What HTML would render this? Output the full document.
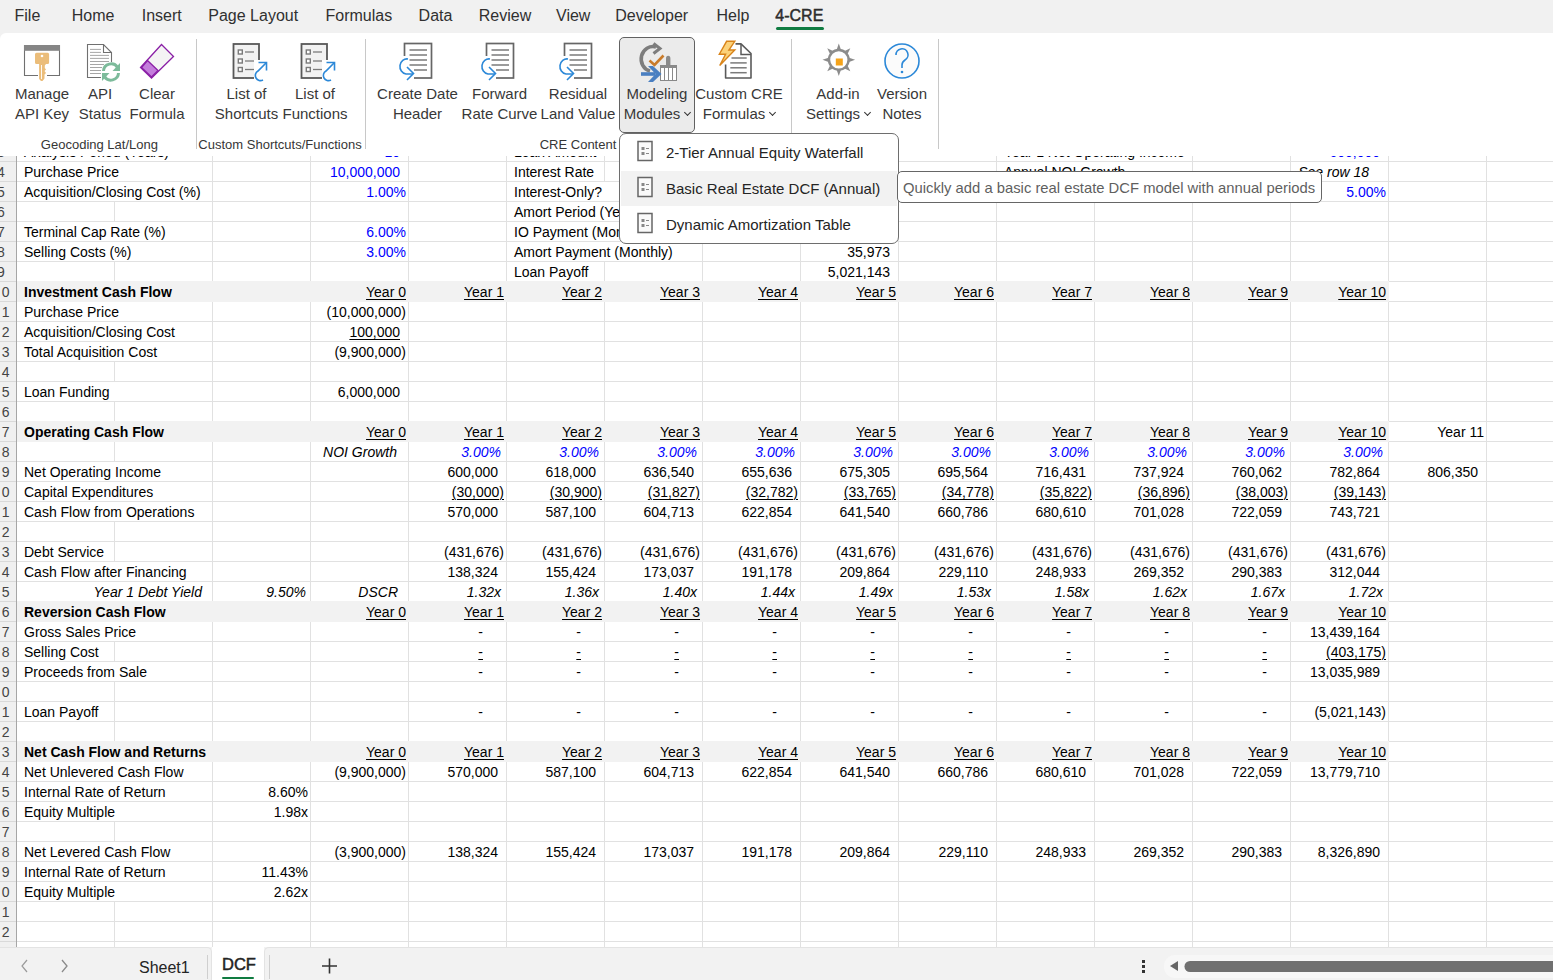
<!DOCTYPE html><html><head><meta charset="utf-8"><style>

html,body{margin:0;padding:0;}
body{width:1553px;height:980px;overflow:hidden;position:relative;background:#fff;font-family:"Liberation Sans", sans-serif;}
div,span{position:absolute;box-sizing:border-box;}
.c{font-size:14px;line-height:20px;height:19px;white-space:nowrap;color:#000;}
.blue{color:#0000ff;}
.it{font-style:italic;}
.bd{font-weight:bold;}
.ul{text-decoration:underline;text-underline-offset:2px;text-decoration-thickness:1px;}
.rn{font-size:14px;line-height:20px;color:#444;white-space:nowrap}
#sheet{left:0;top:0;width:1553px;height:980px;overflow:hidden}

</style></head><body>
<div id="sheet"><div style="left:0;top:156px;width:16px;height:791px;background:#f0f0f0"></div><div style="left:0;top:161px;width:16px;height:1px;background:#d9d9d9"></div><div style="left:0;top:181px;width:16px;height:1px;background:#d9d9d9"></div><div style="left:0;top:201px;width:16px;height:1px;background:#d9d9d9"></div><div style="left:0;top:221px;width:16px;height:1px;background:#d9d9d9"></div><div style="left:0;top:241px;width:16px;height:1px;background:#d9d9d9"></div><div style="left:0;top:261px;width:16px;height:1px;background:#d9d9d9"></div><div style="left:0;top:281px;width:16px;height:1px;background:#d9d9d9"></div><div style="left:0;top:301px;width:16px;height:1px;background:#d9d9d9"></div><div style="left:0;top:321px;width:16px;height:1px;background:#d9d9d9"></div><div style="left:0;top:341px;width:16px;height:1px;background:#d9d9d9"></div><div style="left:0;top:361px;width:16px;height:1px;background:#d9d9d9"></div><div style="left:0;top:381px;width:16px;height:1px;background:#d9d9d9"></div><div style="left:0;top:401px;width:16px;height:1px;background:#d9d9d9"></div><div style="left:0;top:421px;width:16px;height:1px;background:#d9d9d9"></div><div style="left:0;top:441px;width:16px;height:1px;background:#d9d9d9"></div><div style="left:0;top:461px;width:16px;height:1px;background:#d9d9d9"></div><div style="left:0;top:481px;width:16px;height:1px;background:#d9d9d9"></div><div style="left:0;top:501px;width:16px;height:1px;background:#d9d9d9"></div><div style="left:0;top:521px;width:16px;height:1px;background:#d9d9d9"></div><div style="left:0;top:541px;width:16px;height:1px;background:#d9d9d9"></div><div style="left:0;top:561px;width:16px;height:1px;background:#d9d9d9"></div><div style="left:0;top:581px;width:16px;height:1px;background:#d9d9d9"></div><div style="left:0;top:601px;width:16px;height:1px;background:#d9d9d9"></div><div style="left:0;top:621px;width:16px;height:1px;background:#d9d9d9"></div><div style="left:0;top:641px;width:16px;height:1px;background:#d9d9d9"></div><div style="left:0;top:661px;width:16px;height:1px;background:#d9d9d9"></div><div style="left:0;top:681px;width:16px;height:1px;background:#d9d9d9"></div><div style="left:0;top:701px;width:16px;height:1px;background:#d9d9d9"></div><div style="left:0;top:721px;width:16px;height:1px;background:#d9d9d9"></div><div style="left:0;top:741px;width:16px;height:1px;background:#d9d9d9"></div><div style="left:0;top:761px;width:16px;height:1px;background:#d9d9d9"></div><div style="left:0;top:781px;width:16px;height:1px;background:#d9d9d9"></div><div style="left:0;top:801px;width:16px;height:1px;background:#d9d9d9"></div><div style="left:0;top:821px;width:16px;height:1px;background:#d9d9d9"></div><div style="left:0;top:841px;width:16px;height:1px;background:#d9d9d9"></div><div style="left:0;top:861px;width:16px;height:1px;background:#d9d9d9"></div><div style="left:0;top:881px;width:16px;height:1px;background:#d9d9d9"></div><div style="left:0;top:901px;width:16px;height:1px;background:#d9d9d9"></div><div style="left:0;top:921px;width:16px;height:1px;background:#d9d9d9"></div><div style="left:0;top:941px;width:16px;height:1px;background:#d9d9d9"></div><div style="left:16px;top:156px;width:1px;height:791px;background:#a6a6a6"></div><div class="rn" style="left:-3px;top:142px">3</div><div class="rn" style="left:-3px;top:162px">4</div><div class="rn" style="left:-3px;top:182px">5</div><div class="rn" style="left:-3px;top:202px">6</div><div class="rn" style="left:-3px;top:222px">7</div><div class="rn" style="left:-3px;top:242px">8</div><div class="rn" style="left:-3px;top:262px">9</div><div class="rn" style="left:1.8px;top:282px">0</div><div class="rn" style="left:1.8px;top:302px">1</div><div class="rn" style="left:1.8px;top:322px">2</div><div class="rn" style="left:1.8px;top:342px">3</div><div class="rn" style="left:1.8px;top:362px">4</div><div class="rn" style="left:1.8px;top:382px">5</div><div class="rn" style="left:1.8px;top:402px">6</div><div class="rn" style="left:1.8px;top:422px">7</div><div class="rn" style="left:1.8px;top:442px">8</div><div class="rn" style="left:1.8px;top:462px">9</div><div class="rn" style="left:1.8px;top:482px">0</div><div class="rn" style="left:1.8px;top:502px">1</div><div class="rn" style="left:1.8px;top:522px">2</div><div class="rn" style="left:1.8px;top:542px">3</div><div class="rn" style="left:1.8px;top:562px">4</div><div class="rn" style="left:1.8px;top:582px">5</div><div class="rn" style="left:1.8px;top:602px">6</div><div class="rn" style="left:1.8px;top:622px">7</div><div class="rn" style="left:1.8px;top:642px">8</div><div class="rn" style="left:1.8px;top:662px">9</div><div class="rn" style="left:1.8px;top:682px">0</div><div class="rn" style="left:1.8px;top:702px">1</div><div class="rn" style="left:1.8px;top:722px">2</div><div class="rn" style="left:1.8px;top:742px">3</div><div class="rn" style="left:1.8px;top:762px">4</div><div class="rn" style="left:1.8px;top:782px">5</div><div class="rn" style="left:1.8px;top:802px">6</div><div class="rn" style="left:1.8px;top:822px">7</div><div class="rn" style="left:1.8px;top:842px">8</div><div class="rn" style="left:1.8px;top:862px">9</div><div class="rn" style="left:1.8px;top:882px">0</div><div class="rn" style="left:1.8px;top:902px">1</div><div class="rn" style="left:1.8px;top:922px">2</div><div class="rn" style="left:1.8px;top:942px">3</div><div style="left:114px;top:156px;width:1px;height:791px;background:#e1e1e1"></div><div style="left:212px;top:156px;width:1px;height:791px;background:#e1e1e1"></div><div style="left:310px;top:156px;width:1px;height:791px;background:#e1e1e1"></div><div style="left:408px;top:156px;width:1px;height:791px;background:#e1e1e1"></div><div style="left:506px;top:156px;width:1px;height:791px;background:#e1e1e1"></div><div style="left:604px;top:156px;width:1px;height:791px;background:#e1e1e1"></div><div style="left:702px;top:156px;width:1px;height:791px;background:#e1e1e1"></div><div style="left:800px;top:156px;width:1px;height:791px;background:#e1e1e1"></div><div style="left:898px;top:156px;width:1px;height:791px;background:#e1e1e1"></div><div style="left:996px;top:156px;width:1px;height:791px;background:#e1e1e1"></div><div style="left:1094px;top:156px;width:1px;height:791px;background:#e1e1e1"></div><div style="left:1192px;top:156px;width:1px;height:791px;background:#e1e1e1"></div><div style="left:1290px;top:156px;width:1px;height:791px;background:#e1e1e1"></div><div style="left:1388px;top:156px;width:1px;height:791px;background:#e1e1e1"></div><div style="left:1486px;top:156px;width:1px;height:791px;background:#e1e1e1"></div><div style="left:17px;top:161px;width:1536px;height:1px;background:#e1e1e1"></div><div style="left:17px;top:181px;width:1536px;height:1px;background:#e1e1e1"></div><div style="left:17px;top:201px;width:1536px;height:1px;background:#e1e1e1"></div><div style="left:17px;top:221px;width:1536px;height:1px;background:#e1e1e1"></div><div style="left:17px;top:241px;width:1536px;height:1px;background:#e1e1e1"></div><div style="left:17px;top:261px;width:1536px;height:1px;background:#e1e1e1"></div><div style="left:17px;top:281px;width:1536px;height:1px;background:#e1e1e1"></div><div style="left:17px;top:301px;width:1536px;height:1px;background:#e1e1e1"></div><div style="left:17px;top:321px;width:1536px;height:1px;background:#e1e1e1"></div><div style="left:17px;top:341px;width:1536px;height:1px;background:#e1e1e1"></div><div style="left:17px;top:361px;width:1536px;height:1px;background:#e1e1e1"></div><div style="left:17px;top:381px;width:1536px;height:1px;background:#e1e1e1"></div><div style="left:17px;top:401px;width:1536px;height:1px;background:#e1e1e1"></div><div style="left:17px;top:421px;width:1536px;height:1px;background:#e1e1e1"></div><div style="left:17px;top:441px;width:1536px;height:1px;background:#e1e1e1"></div><div style="left:17px;top:461px;width:1536px;height:1px;background:#e1e1e1"></div><div style="left:17px;top:481px;width:1536px;height:1px;background:#e1e1e1"></div><div style="left:17px;top:501px;width:1536px;height:1px;background:#e1e1e1"></div><div style="left:17px;top:521px;width:1536px;height:1px;background:#e1e1e1"></div><div style="left:17px;top:541px;width:1536px;height:1px;background:#e1e1e1"></div><div style="left:17px;top:561px;width:1536px;height:1px;background:#e1e1e1"></div><div style="left:17px;top:581px;width:1536px;height:1px;background:#e1e1e1"></div><div style="left:17px;top:601px;width:1536px;height:1px;background:#e1e1e1"></div><div style="left:17px;top:621px;width:1536px;height:1px;background:#e1e1e1"></div><div style="left:17px;top:641px;width:1536px;height:1px;background:#e1e1e1"></div><div style="left:17px;top:661px;width:1536px;height:1px;background:#e1e1e1"></div><div style="left:17px;top:681px;width:1536px;height:1px;background:#e1e1e1"></div><div style="left:17px;top:701px;width:1536px;height:1px;background:#e1e1e1"></div><div style="left:17px;top:721px;width:1536px;height:1px;background:#e1e1e1"></div><div style="left:17px;top:741px;width:1536px;height:1px;background:#e1e1e1"></div><div style="left:17px;top:761px;width:1536px;height:1px;background:#e1e1e1"></div><div style="left:17px;top:781px;width:1536px;height:1px;background:#e1e1e1"></div><div style="left:17px;top:801px;width:1536px;height:1px;background:#e1e1e1"></div><div style="left:17px;top:821px;width:1536px;height:1px;background:#e1e1e1"></div><div style="left:17px;top:841px;width:1536px;height:1px;background:#e1e1e1"></div><div style="left:17px;top:861px;width:1536px;height:1px;background:#e1e1e1"></div><div style="left:17px;top:881px;width:1536px;height:1px;background:#e1e1e1"></div><div style="left:17px;top:901px;width:1536px;height:1px;background:#e1e1e1"></div><div style="left:17px;top:921px;width:1536px;height:1px;background:#e1e1e1"></div><div style="left:17px;top:941px;width:1536px;height:1px;background:#e1e1e1"></div><div style="left:17px;top:281px;width:1372px;height:21px;background:#f2f2f2"></div><div style="left:17px;top:421px;width:1372px;height:21px;background:#f2f2f2"></div><div style="left:17px;top:601px;width:1372px;height:21px;background:#f2f2f2"></div><div style="left:17px;top:741px;width:1372px;height:21px;background:#f2f2f2"></div><div class="c " style="left:24px;background:#fff;padding-right:6px;top:142px">Analysis Period (Years)</div><div class="c blue" style="right:1153px;top:142px">10</div><div class="c " style="left:514px;background:#fff;padding-right:6px;top:142px">Loan Amount</div><div class="c " style="right:663px;top:142px">6,000,000</div><div class="c " style="left:1004px;background:#fff;padding-right:6px;top:142px">Year 1 Net Operating Income</div><div class="c blue" style="right:173px;top:142px">600,000</div><div class="c " style="left:24px;background:#fff;padding-right:6px;top:162px">Purchase Price</div><div class="c blue" style="right:1153px;top:162px">10,000,000</div><div class="c " style="left:514px;background:#fff;padding-right:6px;top:162px">Interest Rate</div><div class="c blue" style="right:657px;top:162px">5.00%</div><div class="c " style="left:1004px;background:#fff;padding-right:6px;top:162px">Annual NOI Growth</div><div class="c it" style="right:184px;top:162px">See row 18</div><div class="c " style="left:24px;background:#fff;padding-right:6px;top:182px">Acquisition/Closing Cost (%)</div><div class="c blue" style="right:1147px;top:182px">1.00%</div><div class="c " style="left:514px;background:#fff;padding-right:6px;top:182px">Interest-Only?</div><div class="c " style="left:1004px;background:#fff;padding-right:6px;top:182px">Annual Capex (% of NOI)</div><div class="c blue" style="right:167px;top:182px">5.00%</div><div class="c " style="left:514px;background:#fff;padding-right:6px;top:202px">Amort Period (Years)</div><div class="c " style="left:24px;background:#fff;padding-right:6px;top:222px">Terminal Cap Rate (%)</div><div class="c blue" style="right:1147px;top:222px">6.00%</div><div class="c " style="left:514px;background:#fff;padding-right:6px;top:222px">IO Payment (Monthly)</div><div class="c " style="left:24px;background:#fff;padding-right:6px;top:242px">Selling Costs (%)</div><div class="c blue" style="right:1147px;top:242px">3.00%</div><div class="c " style="left:514px;background:#fff;padding-right:6px;top:242px">Amort Payment (Monthly)</div><div class="c " style="right:663px;top:242px">35,973</div><div class="c " style="left:514px;background:#fff;padding-right:6px;top:262px">Loan Payoff</div><div class="c " style="right:663px;top:262px">5,021,143</div><div class="c bd" style="left:24px;top:282px">Investment Cash Flow</div><div class="c ul" style="right:1147px;top:282px">Year 0</div><div class="c ul" style="right:1049px;top:282px">Year 1</div><div class="c ul" style="right:951px;top:282px">Year 2</div><div class="c ul" style="right:853px;top:282px">Year 3</div><div class="c ul" style="right:755px;top:282px">Year 4</div><div class="c ul" style="right:657px;top:282px">Year 5</div><div class="c ul" style="right:559px;top:282px">Year 6</div><div class="c ul" style="right:461px;top:282px">Year 7</div><div class="c ul" style="right:363px;top:282px">Year 8</div><div class="c ul" style="right:265px;top:282px">Year 9</div><div class="c ul" style="right:167px;top:282px">Year 10</div><div class="c " style="left:24px;background:#fff;padding-right:6px;top:302px">Purchase Price</div><div class="c " style="right:1147px;top:302px">(10,000,000)</div><div class="c " style="left:24px;background:#fff;padding-right:6px;top:322px">Acquisition/Closing Cost</div><div class="c ul" style="right:1153px;top:322px">100,000</div><div class="c " style="left:24px;background:#fff;padding-right:6px;top:342px">Total Acquisition Cost</div><div class="c " style="right:1147px;top:342px">(9,900,000)</div><div class="c " style="left:24px;background:#fff;padding-right:6px;top:382px">Loan Funding</div><div class="c " style="right:1153px;top:382px">6,000,000</div><div class="c bd" style="left:24px;top:422px">Operating Cash Flow</div><div class="c ul" style="right:1147px;top:422px">Year 0</div><div class="c ul" style="right:1049px;top:422px">Year 1</div><div class="c ul" style="right:951px;top:422px">Year 2</div><div class="c ul" style="right:853px;top:422px">Year 3</div><div class="c ul" style="right:755px;top:422px">Year 4</div><div class="c ul" style="right:657px;top:422px">Year 5</div><div class="c ul" style="right:559px;top:422px">Year 6</div><div class="c ul" style="right:461px;top:422px">Year 7</div><div class="c ul" style="right:363px;top:422px">Year 8</div><div class="c ul" style="right:265px;top:422px">Year 9</div><div class="c ul" style="right:167px;top:422px">Year 10</div><div class="c " style="right:69px;top:422px">Year 11</div><div class="c it" style="right:1156px;top:442px">NOI Growth</div><div class="c it blue" style="right:1052px;top:442px">3.00%</div><div class="c it blue" style="right:954px;top:442px">3.00%</div><div class="c it blue" style="right:856px;top:442px">3.00%</div><div class="c it blue" style="right:758px;top:442px">3.00%</div><div class="c it blue" style="right:660px;top:442px">3.00%</div><div class="c it blue" style="right:562px;top:442px">3.00%</div><div class="c it blue" style="right:464px;top:442px">3.00%</div><div class="c it blue" style="right:366px;top:442px">3.00%</div><div class="c it blue" style="right:268px;top:442px">3.00%</div><div class="c it blue" style="right:170px;top:442px">3.00%</div><div class="c " style="left:24px;background:#fff;padding-right:6px;top:462px">Net Operating Income</div><div class="c " style="right:1055px;top:462px">600,000</div><div class="c " style="right:957px;top:462px">618,000</div><div class="c " style="right:859px;top:462px">636,540</div><div class="c " style="right:761px;top:462px">655,636</div><div class="c " style="right:663px;top:462px">675,305</div><div class="c " style="right:565px;top:462px">695,564</div><div class="c " style="right:467px;top:462px">716,431</div><div class="c " style="right:369px;top:462px">737,924</div><div class="c " style="right:271px;top:462px">760,062</div><div class="c " style="right:173px;top:462px">782,864</div><div class="c " style="right:75px;top:462px">806,350</div><div class="c " style="left:24px;background:#fff;padding-right:6px;top:482px">Capital Expenditures</div><div class="c ul" style="right:1049px;top:482px">(30,000)</div><div class="c ul" style="right:951px;top:482px">(30,900)</div><div class="c ul" style="right:853px;top:482px">(31,827)</div><div class="c ul" style="right:755px;top:482px">(32,782)</div><div class="c ul" style="right:657px;top:482px">(33,765)</div><div class="c ul" style="right:559px;top:482px">(34,778)</div><div class="c ul" style="right:461px;top:482px">(35,822)</div><div class="c ul" style="right:363px;top:482px">(36,896)</div><div class="c ul" style="right:265px;top:482px">(38,003)</div><div class="c ul" style="right:167px;top:482px">(39,143)</div><div class="c " style="left:24px;background:#fff;padding-right:6px;top:502px">Cash Flow from Operations</div><div class="c " style="right:1055px;top:502px">570,000</div><div class="c " style="right:957px;top:502px">587,100</div><div class="c " style="right:859px;top:502px">604,713</div><div class="c " style="right:761px;top:502px">622,854</div><div class="c " style="right:663px;top:502px">641,540</div><div class="c " style="right:565px;top:502px">660,786</div><div class="c " style="right:467px;top:502px">680,610</div><div class="c " style="right:369px;top:502px">701,028</div><div class="c " style="right:271px;top:502px">722,059</div><div class="c " style="right:173px;top:502px">743,721</div><div class="c " style="left:24px;background:#fff;padding-right:6px;top:542px">Debt Service</div><div class="c " style="right:1049px;top:542px">(431,676)</div><div class="c " style="right:951px;top:542px">(431,676)</div><div class="c " style="right:853px;top:542px">(431,676)</div><div class="c " style="right:755px;top:542px">(431,676)</div><div class="c " style="right:657px;top:542px">(431,676)</div><div class="c " style="right:559px;top:542px">(431,676)</div><div class="c " style="right:461px;top:542px">(431,676)</div><div class="c " style="right:363px;top:542px">(431,676)</div><div class="c " style="right:265px;top:542px">(431,676)</div><div class="c " style="right:167px;top:542px">(431,676)</div><div class="c " style="left:24px;background:#fff;padding-right:6px;top:562px">Cash Flow after Financing</div><div class="c " style="right:1055px;top:562px">138,324</div><div class="c " style="right:957px;top:562px">155,424</div><div class="c " style="right:859px;top:562px">173,037</div><div class="c " style="right:761px;top:562px">191,178</div><div class="c " style="right:663px;top:562px">209,864</div><div class="c " style="right:565px;top:562px">229,110</div><div class="c " style="right:467px;top:562px">248,933</div><div class="c " style="right:369px;top:562px">269,352</div><div class="c " style="right:271px;top:562px">290,383</div><div class="c " style="right:173px;top:562px">312,044</div><div class="c it" style="right:1351px;background:#fff;top:582px">Year 1 Debt Yield</div><div class="c it" style="right:1247px;top:582px">9.50%</div><div class="c it" style="right:1155px;top:582px">DSCR</div><div class="c it" style="right:1052px;top:582px">1.32x</div><div class="c it" style="right:954px;top:582px">1.36x</div><div class="c it" style="right:856px;top:582px">1.40x</div><div class="c it" style="right:758px;top:582px">1.44x</div><div class="c it" style="right:660px;top:582px">1.49x</div><div class="c it" style="right:562px;top:582px">1.53x</div><div class="c it" style="right:464px;top:582px">1.58x</div><div class="c it" style="right:366px;top:582px">1.62x</div><div class="c it" style="right:268px;top:582px">1.67x</div><div class="c it" style="right:170px;top:582px">1.72x</div><div class="c bd" style="left:24px;top:602px">Reversion Cash Flow</div><div class="c ul" style="right:1147px;top:602px">Year 0</div><div class="c ul" style="right:1049px;top:602px">Year 1</div><div class="c ul" style="right:951px;top:602px">Year 2</div><div class="c ul" style="right:853px;top:602px">Year 3</div><div class="c ul" style="right:755px;top:602px">Year 4</div><div class="c ul" style="right:657px;top:602px">Year 5</div><div class="c ul" style="right:559px;top:602px">Year 6</div><div class="c ul" style="right:461px;top:602px">Year 7</div><div class="c ul" style="right:363px;top:602px">Year 8</div><div class="c ul" style="right:265px;top:602px">Year 9</div><div class="c ul" style="right:167px;top:602px">Year 10</div><div class="c " style="left:24px;background:#fff;padding-right:6px;top:622px">Gross Sales Price</div><div class="c " style="left:24px;background:#fff;padding-right:6px;top:642px">Selling Cost</div><div class="c " style="left:24px;background:#fff;padding-right:6px;top:662px">Proceeds from Sale</div><div class="c " style="left:24px;background:#fff;padding-right:6px;top:702px">Loan Payoff</div><div class="c " style="right:1070px;top:622px">-</div><div class="c " style="right:972px;top:622px">-</div><div class="c " style="right:874px;top:622px">-</div><div class="c " style="right:776px;top:622px">-</div><div class="c " style="right:678px;top:622px">-</div><div class="c " style="right:580px;top:622px">-</div><div class="c " style="right:482px;top:622px">-</div><div class="c " style="right:384px;top:622px">-</div><div class="c " style="right:286px;top:622px">-</div><div class="c ul" style="right:1070px;top:642px">-</div><div class="c ul" style="right:972px;top:642px">-</div><div class="c ul" style="right:874px;top:642px">-</div><div class="c ul" style="right:776px;top:642px">-</div><div class="c ul" style="right:678px;top:642px">-</div><div class="c ul" style="right:580px;top:642px">-</div><div class="c ul" style="right:482px;top:642px">-</div><div class="c ul" style="right:384px;top:642px">-</div><div class="c ul" style="right:286px;top:642px">-</div><div class="c " style="right:1070px;top:662px">-</div><div class="c " style="right:972px;top:662px">-</div><div class="c " style="right:874px;top:662px">-</div><div class="c " style="right:776px;top:662px">-</div><div class="c " style="right:678px;top:662px">-</div><div class="c " style="right:580px;top:662px">-</div><div class="c " style="right:482px;top:662px">-</div><div class="c " style="right:384px;top:662px">-</div><div class="c " style="right:286px;top:662px">-</div><div class="c " style="right:1070px;top:702px">-</div><div class="c " style="right:972px;top:702px">-</div><div class="c " style="right:874px;top:702px">-</div><div class="c " style="right:776px;top:702px">-</div><div class="c " style="right:678px;top:702px">-</div><div class="c " style="right:580px;top:702px">-</div><div class="c " style="right:482px;top:702px">-</div><div class="c " style="right:384px;top:702px">-</div><div class="c " style="right:286px;top:702px">-</div><div class="c " style="right:173px;top:622px">13,439,164</div><div class="c ul" style="right:167px;top:642px">(403,175)</div><div class="c " style="right:173px;top:662px">13,035,989</div><div class="c " style="right:167px;top:702px">(5,021,143)</div><div class="c bd" style="left:24px;top:742px">Net Cash Flow and Returns</div><div class="c ul" style="right:1147px;top:742px">Year 0</div><div class="c ul" style="right:1049px;top:742px">Year 1</div><div class="c ul" style="right:951px;top:742px">Year 2</div><div class="c ul" style="right:853px;top:742px">Year 3</div><div class="c ul" style="right:755px;top:742px">Year 4</div><div class="c ul" style="right:657px;top:742px">Year 5</div><div class="c ul" style="right:559px;top:742px">Year 6</div><div class="c ul" style="right:461px;top:742px">Year 7</div><div class="c ul" style="right:363px;top:742px">Year 8</div><div class="c ul" style="right:265px;top:742px">Year 9</div><div class="c ul" style="right:167px;top:742px">Year 10</div><div class="c " style="left:24px;background:#fff;padding-right:6px;top:762px">Net Unlevered Cash Flow</div><div class="c " style="right:1147px;top:762px">(9,900,000)</div><div class="c " style="right:1055px;top:762px">570,000</div><div class="c " style="right:957px;top:762px">587,100</div><div class="c " style="right:859px;top:762px">604,713</div><div class="c " style="right:761px;top:762px">622,854</div><div class="c " style="right:663px;top:762px">641,540</div><div class="c " style="right:565px;top:762px">660,786</div><div class="c " style="right:467px;top:762px">680,610</div><div class="c " style="right:369px;top:762px">701,028</div><div class="c " style="right:271px;top:762px">722,059</div><div class="c " style="right:173px;top:762px">13,779,710</div><div class="c " style="left:24px;background:#fff;padding-right:6px;top:782px">Internal Rate of Return</div><div class="c " style="right:1245px;top:782px">8.60%</div><div class="c " style="left:24px;background:#fff;padding-right:6px;top:802px">Equity Multiple</div><div class="c " style="right:1245px;top:802px">1.98x</div><div class="c " style="left:24px;background:#fff;padding-right:6px;top:842px">Net Levered Cash Flow</div><div class="c " style="right:1147px;top:842px">(3,900,000)</div><div class="c " style="right:1055px;top:842px">138,324</div><div class="c " style="right:957px;top:842px">155,424</div><div class="c " style="right:859px;top:842px">173,037</div><div class="c " style="right:761px;top:842px">191,178</div><div class="c " style="right:663px;top:842px">209,864</div><div class="c " style="right:565px;top:842px">229,110</div><div class="c " style="right:467px;top:842px">248,933</div><div class="c " style="right:369px;top:842px">269,352</div><div class="c " style="right:271px;top:842px">290,383</div><div class="c " style="right:173px;top:842px">8,326,890</div><div class="c " style="left:24px;background:#fff;padding-right:6px;top:862px">Internal Rate of Return</div><div class="c " style="right:1245px;top:862px">11.43%</div><div class="c " style="left:24px;background:#fff;padding-right:6px;top:882px">Equity Multiple</div><div class="c " style="right:1245px;top:882px">2.62x</div></div>
<style>
.tab{top:1px;font-size:16px;line-height:30px;height:30px;color:#303030;white-space:nowrap}
.bl{width:120px;text-align:center;font-size:15px;line-height:20px;color:#383838;white-space:nowrap}
.chev{position:relative;display:inline-block;width:5px;height:5px;border-right:1.3px solid #333;border-bottom:1.3px solid #333;transform:rotate(45deg);margin-left:5px;top:-4px}
.gl{width:200px;text-align:center;font-size:13px;line-height:18px;color:#363636;white-space:nowrap}
.dd{font-size:15px;line-height:20px;color:#242424;white-space:nowrap}
.tt{font-size:14.8px;line-height:20px;color:#5f5f5f;white-space:nowrap}
.st{font-size:16px;line-height:22px;color:#242424;white-space:nowrap}
</style><div style="left:0;top:0;width:1553px;height:45px;background:#f1f1f1"></div><div style="left:0;top:33px;width:1553px;height:123px;background:#fff;border-top-left-radius:6px"></div><div class="tab" style="left:14.5px">File</div><div class="tab" style="left:71.8px">Home</div><div class="tab" style="left:141.7px">Insert</div><div class="tab" style="left:208.3px">Page Layout</div><div class="tab" style="left:325.5px">Formulas</div><div class="tab" style="left:418.6px">Data</div><div class="tab" style="left:478.8px">Review</div><div class="tab" style="left:556.0px">View</div><div class="tab" style="left:615.2px">Developer</div><div class="tab" style="left:716.5px">Help</div><div class="tab" style="left:775.3px;-webkit-text-stroke:0.45px #242424">4-CRE</div><div style="left:776px;top:27px;width:48px;height:3px;border-radius:2px;background:#107c41"></div><div style="left:619px;top:37px;width:76px;height:96px;background:#ebebeb;border:1px solid #616161;border-radius:5px"></div><div class="bl" style="left:-18px;top:84px">Manage</div><div class="bl" style="left:-18px;top:104px">API Key</div><div class="bl" style="left:40px;top:84px">API</div><div class="bl" style="left:40px;top:104px">Status</div><div class="bl" style="left:97px;top:84px">Clear</div><div class="bl" style="left:97px;top:104px">Formula</div><div class="bl" style="left:186.5px;top:84px">List of</div><div class="bl" style="left:186.5px;top:104px">Shortcuts</div><div class="bl" style="left:255px;top:84px">List of</div><div class="bl" style="left:255px;top:104px">Functions</div><div class="bl" style="left:357.5px;top:84px">Create Date</div><div class="bl" style="left:357.5px;top:104px">Header</div><div class="bl" style="left:439.5px;top:84px">Forward</div><div class="bl" style="left:439.5px;top:104px">Rate Curve</div><div class="bl" style="left:518px;top:84px">Residual</div><div class="bl" style="left:518px;top:104px">Land Value</div><div class="bl" style="left:597px;top:84px">Modeling</div><div class="bl" style="left:597px;top:104px">Modules<span class="chev"></span></div><div class="bl" style="left:679px;top:84px">Custom CRE</div><div class="bl" style="left:679px;top:104px">Formulas<span class="chev"></span></div><div class="bl" style="left:778px;top:84px">Add-in</div><div class="bl" style="left:778px;top:104px">Settings<span class="chev"></span></div><div class="bl" style="left:842px;top:84px">Version</div><div class="bl" style="left:842px;top:104px">Notes</div><div class="gl" style="left:-0.5999999999999943px;top:136px">Geocoding Lat/Long</div><div class="gl" style="left:180px;top:136px">Custom Shortcuts/Functions</div><div class="gl" style="left:478px;top:136px">CRE Content</div><div style="left:196px;top:39px;width:1px;height:110px;background:#c8c8c8"></div><div style="left:365px;top:39px;width:1px;height:110px;background:#c8c8c8"></div><div style="left:791px;top:39px;width:1px;height:110px;background:#c8c8c8"></div><div style="left:938px;top:39px;width:1px;height:110px;background:#c8c8c8"></div><svg style="position:absolute;left:0;top:0" width="1553" height="160" viewBox="0 0 1553 160"><path d="M38 75.5 H24.5 V45.5 H59.5 V75.5 H47" fill="none" stroke="#707070" stroke-width="1.1"/><rect x="24" y="45" width="36" height="5.8" fill="#858585"/><path d="M36.5 52.8 H47.6 a1.5 1.5 0 0 1 1.5 1.5 V62.5 a1.5 1.5 0 0 1 -1.5 1.5 H46 L44.8 65.5 V68 L46 69.5 L44.5 71 L46 73 L44.5 74.5 V78.5 L42.5 81 H41 L39.1 79 V64 H36.5 a1.5 1.5 0 0 1 -1.5 -1.5 V54.3 a1.5 1.5 0 0 1 1.5 -1.5 z" fill="#ebbd7a"/><line x1="41.5" y1="65" x2="41.5" y2="79" stroke="#fff" stroke-width="0.9"/><circle cx="42" cy="56" r="1.3" fill="#fff"/><path d="M101 77.5 H87.5 V44.5 H103.5 L111.5 52.5 V62" fill="none" stroke="#707070" stroke-width="1.1"/><path d="M103.5 44.5 V52.5 H111.5" fill="none" stroke="#707070" stroke-width="1.1"/><line x1="90" y1="49.4" x2="101" y2="49.4" stroke="#9c9c9c" stroke-width="0.9"/><line x1="90" y1="52.4" x2="101" y2="52.4" stroke="#9c9c9c" stroke-width="0.9"/><line x1="90" y1="55.4" x2="109" y2="55.4" stroke="#9c9c9c" stroke-width="0.9"/><line x1="90" y1="58.4" x2="109" y2="58.4" stroke="#9c9c9c" stroke-width="0.9"/><line x1="90" y1="61.5" x2="109" y2="61.5" stroke="#9c9c9c" stroke-width="0.9"/><line x1="90" y1="64.5" x2="104" y2="64.5" stroke="#9c9c9c" stroke-width="0.9"/><line x1="90" y1="67.5" x2="102" y2="67.5" stroke="#9c9c9c" stroke-width="0.9"/><line x1="90" y1="70.5" x2="101" y2="70.5" stroke="#9c9c9c" stroke-width="0.9"/><line x1="90" y1="73.5" x2="101" y2="73.5" stroke="#9c9c9c" stroke-width="0.9"/><path d="M103.5 71 A7.6 7.4 0 0 1 117.6 67.5" fill="none" stroke="#7dbb9b" stroke-width="3"/><path d="M120 63 V71 H112.5 Z" fill="#7dbb9b"/><path d="M118.5 73 A7.6 7.4 0 0 1 104.4 76.5" fill="none" stroke="#7dbb9b" stroke-width="3"/><path d="M102 81 V73 H109.5 Z" fill="#7dbb9b"/><path d="M161.5 44.5 L173.5 56.5 L151.5 78 L140.5 67.5 Z" fill="#f4f4f4" stroke="#8a1fa6" stroke-width="1.3"/><path d="M147.5 60.5 L158 70.5 L151.5 77 L141.5 67.5 Z" fill="#c47edc" stroke="#8a1fa6" stroke-width="1.3"/><rect x="233.5" y="44" width="25.5" height="34" fill="#f2f2f2" stroke="#585858" stroke-width="1.8"/><rect x="238.3" y="50" width="4" height="4" fill="#fff" stroke="#7a7a7a" stroke-width="1.4"/><line x1="245" y1="52" x2="254" y2="52" stroke="#7a7a7a" stroke-width="1.3"/><rect x="238.3" y="59" width="4" height="4" fill="#fff" stroke="#7a7a7a" stroke-width="1.4"/><line x1="245" y1="61" x2="254" y2="61" stroke="#7a7a7a" stroke-width="1.3"/><rect x="238.3" y="67.5" width="4" height="4" fill="#fff" stroke="#7a7a7a" stroke-width="1.4"/><line x1="245" y1="69.5" x2="254" y2="69.5" stroke="#7a7a7a" stroke-width="1.3"/><path d="M254 82 V60 H268 V82 Z" fill="#fff"/><path d="M266.5 62.5 L258 71 A5 5 0 1 0 263 80" fill="none" stroke="#2b88d8" stroke-width="1.6"/><path d="M258.5 62.5 H266.5 V70.5" fill="none" stroke="#2b88d8" stroke-width="1.6"/><rect x="301.5" y="44" width="25.5" height="34" fill="#f2f2f2" stroke="#585858" stroke-width="1.8"/><rect x="306.3" y="50" width="4" height="4" fill="#fff" stroke="#7a7a7a" stroke-width="1.4"/><line x1="313" y1="52" x2="322" y2="52" stroke="#7a7a7a" stroke-width="1.3"/><rect x="306.3" y="59" width="4" height="4" fill="#fff" stroke="#7a7a7a" stroke-width="1.4"/><line x1="313" y1="61" x2="322" y2="61" stroke="#7a7a7a" stroke-width="1.3"/><rect x="306.3" y="67.5" width="4" height="4" fill="#fff" stroke="#7a7a7a" stroke-width="1.4"/><line x1="313" y1="69.5" x2="322" y2="69.5" stroke="#7a7a7a" stroke-width="1.3"/><path d="M322 82 V60 H336 V82 Z" fill="#fff"/><path d="M334.5 62.5 L326 71 A5 5 0 1 0 331 80" fill="none" stroke="#2b88d8" stroke-width="1.6"/><path d="M326.5 62.5 H334.5 V70.5" fill="none" stroke="#2b88d8" stroke-width="1.6"/><rect x="404.5" y="43.5" width="27" height="34.5" fill="#fff" stroke="#666" stroke-width="1.7"/><line x1="409.5" y1="50" x2="427" y2="50" stroke="#7a7a7a" stroke-width="1.5"/><line x1="409.5" y1="55" x2="427" y2="55" stroke="#7a7a7a" stroke-width="1.5"/><line x1="409.5" y1="60" x2="427" y2="60" stroke="#7a7a7a" stroke-width="1.5"/><line x1="409.5" y1="65" x2="427" y2="65" stroke="#7a7a7a" stroke-width="1.5"/><line x1="414" y1="70" x2="427" y2="70" stroke="#7a7a7a" stroke-width="1.5"/><path d="M396 56 H406 V72 H414 V82 H396 Z" fill="#fff"/><path d="M408 59 A7 7.5 0 0 0 406 74 H413" fill="none" stroke="#2b88d8" stroke-width="1.6"/><path d="M407 67 L413.5 73.5 L407 80" fill="none" stroke="#2b88d8" stroke-width="1.6"/><rect x="486.5" y="43.5" width="27" height="34.5" fill="#fff" stroke="#666" stroke-width="1.7"/><line x1="491.5" y1="50" x2="509" y2="50" stroke="#7a7a7a" stroke-width="1.5"/><line x1="491.5" y1="55" x2="509" y2="55" stroke="#7a7a7a" stroke-width="1.5"/><line x1="491.5" y1="60" x2="509" y2="60" stroke="#7a7a7a" stroke-width="1.5"/><line x1="491.5" y1="65" x2="509" y2="65" stroke="#7a7a7a" stroke-width="1.5"/><line x1="496" y1="70" x2="509" y2="70" stroke="#7a7a7a" stroke-width="1.5"/><path d="M478 56 H488 V72 H496 V82 H478 Z" fill="#fff"/><path d="M490 59 A7 7.5 0 0 0 488 74 H495" fill="none" stroke="#2b88d8" stroke-width="1.6"/><path d="M489 67 L495.5 73.5 L489 80" fill="none" stroke="#2b88d8" stroke-width="1.6"/><rect x="564.5" y="43.5" width="27" height="34.5" fill="#fff" stroke="#666" stroke-width="1.7"/><line x1="569.5" y1="50" x2="587" y2="50" stroke="#7a7a7a" stroke-width="1.5"/><line x1="569.5" y1="55" x2="587" y2="55" stroke="#7a7a7a" stroke-width="1.5"/><line x1="569.5" y1="60" x2="587" y2="60" stroke="#7a7a7a" stroke-width="1.5"/><line x1="569.5" y1="65" x2="587" y2="65" stroke="#7a7a7a" stroke-width="1.5"/><line x1="574" y1="70" x2="587" y2="70" stroke="#7a7a7a" stroke-width="1.5"/><path d="M556 56 H566 V72 H574 V82 H556 Z" fill="#fff"/><path d="M568 59 A7 7.5 0 0 0 566 74 H573" fill="none" stroke="#2b88d8" stroke-width="1.6"/><path d="M567 67 L573.5 73.5 L567 80" fill="none" stroke="#2b88d8" stroke-width="1.6"/><path d="M650 71 A10.5 11 0 0 1 656 47" fill="none" stroke="#7d7d7d" stroke-width="3.6"/><path d="M653.5 43.5 L660 48.5 L653.5 53.5" fill="none" stroke="#7d7d7d" stroke-width="3"/><path d="M649.5 60.5 l5 4.5 l9 -9.5" fill="none" stroke="#c97b2b" stroke-width="2.6"/><path d="M666 65 v-6.5 a2.2 2.8 0 0 1 4.4 0 v6.5 z" fill="#8a8a8a"/><rect x="660.5" y="65.5" width="16" height="15" fill="#fff" stroke="#888" stroke-width="1"/><rect x="660.5" y="65.5" width="16" height="2.5" fill="#8a8a8a"/><line x1="664.5" y1="68" x2="664.5" y2="80" stroke="#8a8a8a" stroke-width="1"/><line x1="668.5" y1="68" x2="668.5" y2="80" stroke="#8a8a8a" stroke-width="1"/><line x1="672.5" y1="68" x2="672.5" y2="80" stroke="#8a8a8a" stroke-width="1"/><path d="M641 74 h14" stroke="#4a7fc1" stroke-width="3.6"/><path d="M648 66 L653 66 L661.5 74 L653 82 L648 82 L655.5 74 Z" fill="#4a7fc1"/><path d="M725.6 64.5 V78 H751 V53.5 L741 43.9 H735.5" fill="none" stroke="#5a5a5a" stroke-width="1.6" stroke-linejoin="round"/><path d="M741 44 V54.5 H751" fill="none" stroke="#5a5a5a" stroke-width="1.5"/><line x1="731.5" y1="58" x2="746.7" y2="58" stroke="#7a7a7a" stroke-width="1.5"/><line x1="730.3" y1="62.9" x2="746.7" y2="62.9" stroke="#7a7a7a" stroke-width="1.5"/><line x1="730.3" y1="67.8" x2="746.7" y2="67.8" stroke="#7a7a7a" stroke-width="1.5"/><line x1="730.3" y1="72.7" x2="746.7" y2="72.7" stroke="#7a7a7a" stroke-width="1.5"/><path d="M726.6 41.3 H734.8 L728.9 50 H734.8 L719.7 65.5 L725.6 54.2 H719.3 Z" fill="#fcd27a" stroke="#d9841a" stroke-width="1.4" stroke-linejoin="miter"/><circle cx="838.8" cy="59.8" r="9.8" fill="#fff" stroke="#8c8c8c" stroke-width="2.4"/><polygon points="836.71,49.51 838.80,43.50 840.89,49.51" fill="#8c8c8c"/><polygon points="844.60,51.05 850.33,48.27 847.55,54.00" fill="#8c8c8c"/><polygon points="849.09,57.71 855.10,59.80 849.09,61.89" fill="#8c8c8c"/><polygon points="847.55,65.60 850.33,71.33 844.60,68.55" fill="#8c8c8c"/><polygon points="840.89,70.09 838.80,76.10 836.71,70.09" fill="#8c8c8c"/><polygon points="833.00,68.55 827.27,71.33 830.05,65.60" fill="#8c8c8c"/><polygon points="828.51,61.89 822.50,59.80 828.51,57.71" fill="#8c8c8c"/><polygon points="830.05,54.00 827.27,48.27 833.00,51.05" fill="#8c8c8c"/><rect x="835.8" y="58.5" width="7" height="7" fill="#f5a31a"/><circle cx="902" cy="61" r="17" fill="#fbfbfb" stroke="#2b88d8" stroke-width="1.6"/><path d="M896 55 a6 6 0 1 1 9 5 q-3 2 -3 5 v3" fill="none" stroke="#2b88d8" stroke-width="1.6"/><circle cx="902" cy="72" r="1.3" fill="#2b88d8"/></svg><div style="left:619px;top:133px;width:280px;height:111px;background:#fff;border:1px solid #6e6e6e;border-radius:7px"></div><div style="left:621px;top:171px;width:276px;height:35px;background:#f2f2f2"></div><div class="dd" style="left:666px;top:143px">2-Tier Annual Equity Waterfall</div><div class="dd" style="left:666px;top:179px">Basic Real Estate DCF (Annual)</div><div class="dd" style="left:666px;top:215px">Dynamic Amortization Table</div><svg style="position:absolute;left:0;top:0" width="1553" height="250" viewBox="0 0 1553 250"><rect x="638" y="141.5" width="14" height="19" fill="#fafafa" stroke="#666" stroke-width="1.5"/><rect x="641.5" y="147" width="3" height="3" fill="#888"/><rect x="641.5" y="152" width="3" height="3" fill="#888"/><line x1="646" y1="148.5" x2="649" y2="148.5" stroke="#888" stroke-width="1"/><line x1="646" y1="153.5" x2="649" y2="153.5" stroke="#888" stroke-width="1"/><rect x="638" y="177.5" width="14" height="19" fill="#fafafa" stroke="#666" stroke-width="1.5"/><rect x="641.5" y="183" width="3" height="3" fill="#888"/><rect x="641.5" y="188" width="3" height="3" fill="#888"/><line x1="646" y1="184.5" x2="649" y2="184.5" stroke="#888" stroke-width="1"/><line x1="646" y1="189.5" x2="649" y2="189.5" stroke="#888" stroke-width="1"/><rect x="638" y="213.5" width="14" height="19" fill="#fafafa" stroke="#666" stroke-width="1.5"/><rect x="641.5" y="219" width="3" height="3" fill="#888"/><rect x="641.5" y="224" width="3" height="3" fill="#888"/><line x1="646" y1="220.5" x2="649" y2="220.5" stroke="#888" stroke-width="1"/><line x1="646" y1="225.5" x2="649" y2="225.5" stroke="#888" stroke-width="1"/></svg><div style="left:897px;top:171px;width:425px;height:32px;background:#fff;border:1px solid #666;border-radius:5px"></div><div class="tt" style="left:903px;top:178px">Quickly add a basic real estate DCF model with annual periods</div><div style="left:0;top:947px;width:1553px;height:33px;background:#f2f2f2"></div><div style="left:212px;top:947px;width:52px;height:33px;background:#fff"></div><div style="left:0;top:947px;width:212px;height:33px;background:#f2f2f2;border-top:1px solid #e3e3e3;border-right:1px solid #e3e3e3;border-top-right-radius:5px"></div><div style="left:264px;top:947px;width:1289px;height:33px;background:#f2f2f2;border-top:1px solid #e3e3e3;border-left:1px solid #e3e3e3;border-top-left-radius:5px"></div><div class="st" style="left:139px;top:957px">Sheet1</div><div class="st" style="left:222px;top:953px;font-size:16.5px;-webkit-text-stroke:0.5px #242424">DCF</div><div style="left:222px;top:977px;width:32px;height:2px;background:#107c41;border-radius:1px"></div><div style="left:207px;top:955px;width:1px;height:24px;background:#cfcfcf"></div><div style="left:269px;top:955px;width:1px;height:24px;background:#cfcfcf"></div><svg style="position:absolute;left:0;top:0" width="1553" height="980" viewBox="0 0 1553 980"><path d="M27 960 l-5 6 l5 6" fill="none" stroke="#9a9a9a" stroke-width="1.2"/><path d="M62 960 l5 6 l-5 6" fill="none" stroke="#8a8a8a" stroke-width="1.3"/><path d="M322 966 h15 M329.5 958.5 v15" stroke="#333" stroke-width="1.6"/><rect x="1142" y="960" width="3" height="3" fill="#333"/><rect x="1142" y="965" width="3" height="3" fill="#333"/><rect x="1142" y="970" width="3" height="3" fill="#333"/><rect x="1164" y="955" width="400" height="23" rx="11" fill="#f7f7f7"/><path d="M1178 961 v10 l-8 -5 z" fill="#666"/><rect x="1184.5" y="961" width="380" height="11" rx="5.5" fill="#707070"/></svg>
</body></html>
